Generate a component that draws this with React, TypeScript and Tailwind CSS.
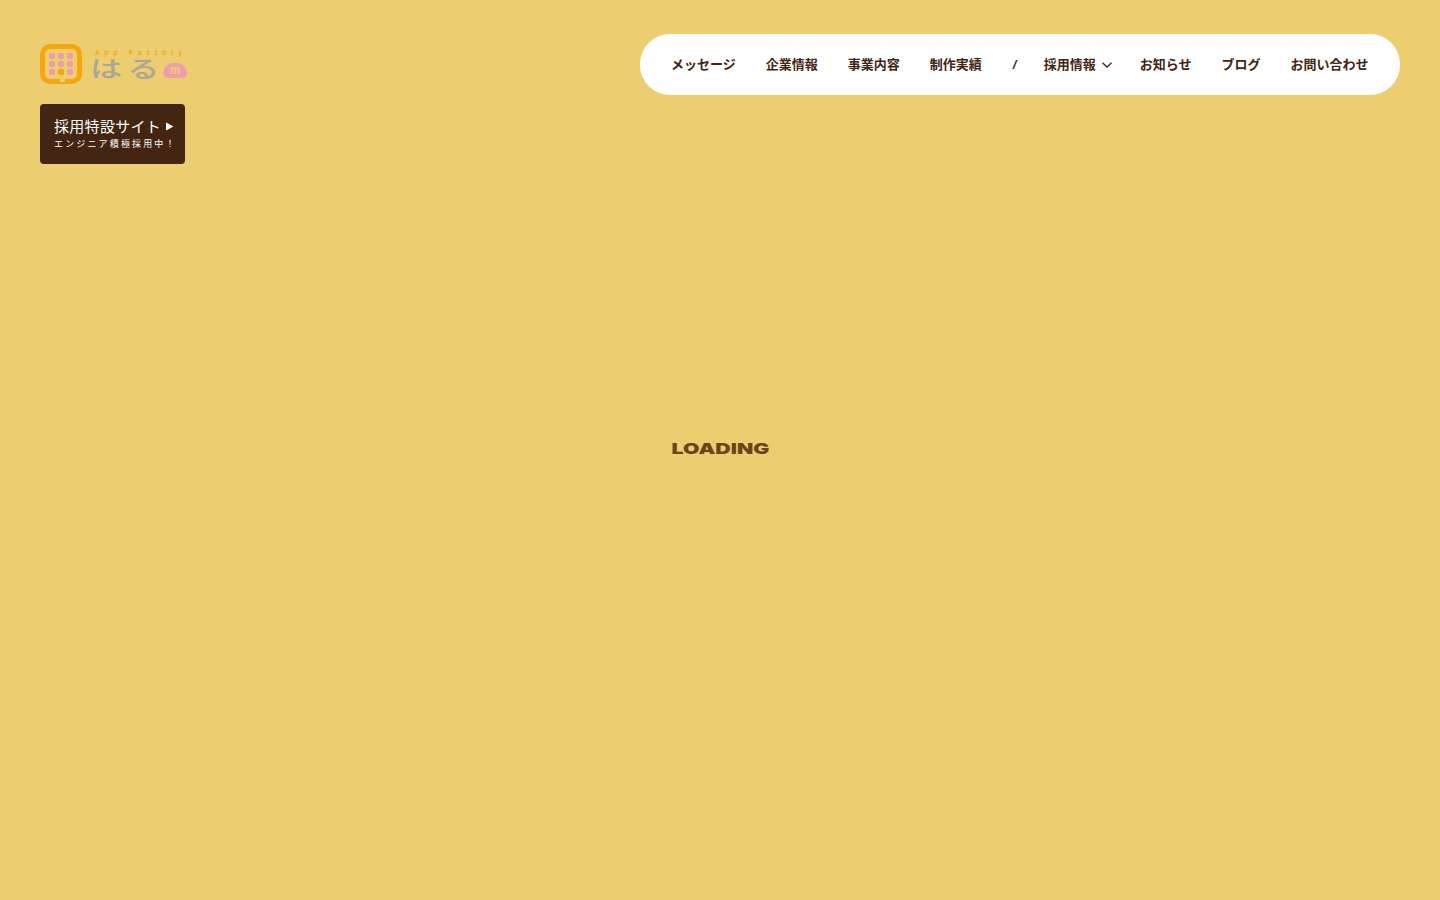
const navItems = ["メッセージ", "企業情報", "事業内容", "制作実績"]
const navItemsRight = ["お知らせ", "ブログ", "お問い合わせ"]

const cjk = "font-['Noto_Sans_CJK_JP','Noto_Sans',sans-serif]"

function LogoMark() {
  const pink = [0, 1, 2, 3, 4, 5, 6, 8]
  return (
    <div className="relative flex h-10 w-[42px] items-center justify-center rounded-[10px] border-[5px] border-[#f6a70f] bg-[#eccd70]">
      <div className="grid grid-cols-3 gap-x-[3px] gap-y-[2px]">
        {[0, 1, 2, 3, 4, 5, 6, 7, 8].map((i) => (
          <span
            key={i}
            className={pink.includes(i) ? "h-[6px] w-[6px] rounded-[2px] bg-[#ea9fae]" : "h-[6px] w-[6px] rounded-[1px] bg-[#f6a70f]"}
          />
        ))}
      </div>
      <span className="absolute -bottom-[3px] left-[15px] h-[3px] w-[5px] bg-[#eccd70]" />
    </div>
  )
}

function Logo() {
  return (
    <div className="flex h-10 items-start gap-[8px]">
      <LogoMark />
      <div className="flex w-[98px] flex-col">
        <span className="mt-[4px] h-[10px] pl-[5px] font-['Liberation_Sans',sans-serif] text-[6.5px] leading-[10px] font-bold tracking-[4.9px] whitespace-nowrap text-[#f6a70f]">
          App Factory
        </span>
        <div className="flex h-[22px] items-center">
          <span className="w-[73px]">
            <span className={`${cjk} inline-block origin-left scale-x-[1.4] text-[23px] leading-[22px] font-medium tracking-[3.5px] whitespace-nowrap text-[#a9a69a]`}>
              はる
            </span>
          </span>
          <span className="mt-[3px] flex h-[15px] w-[24px] shrink-0 items-center justify-center rounded-t-[10px] rounded-b-[5px] bg-[#ee9db0] font-['Liberation_Sans',sans-serif] text-[12px] leading-[15px] font-bold text-[#eccd70]">
            m
          </span>
        </div>
      </div>
    </div>
  )
}

function RecruitButton() {
  return (
    <a className={`${cjk} flex h-[60px] w-[145px] flex-col rounded-[4px] bg-[#432511] pt-[12px] pl-[14px] text-white`}>
      <span className="flex items-center text-[15px] leading-[20px] tracking-[0.3px] whitespace-nowrap">
        採用特設サイト
        <svg className="mt-[1px] ml-[4px]" width="9" height="9" viewBox="0 0 9 9" fill="#ffffff">
          <path d="M1 0.5 L8.5 4.5 L1 8.5 Z" />
        </svg>
      </span>
      <span className="mt-[2px] text-[9px] leading-[12px] tracking-[2.15px] whitespace-nowrap">エンジニア積極採用中！</span>
    </a>
  )
}

function Nav() {
  return (
    <nav className={`${cjk} flex h-[61px] w-[760px] items-center rounded-[30px] bg-white pb-[2px] pl-[31px] text-[13px] font-bold whitespace-nowrap text-[#432511]`}>
      <div className="flex gap-[30px]">
        {navItems.map((item) => (
          <a key={item}>{item}</a>
        ))}
      </div>
      <span className="mt-[3px] ml-[31px] w-[31px] font-['Liberation_Sans',sans-serif] text-[13px] italic">/</span>
      <a className="flex items-center">
        採用情報
        <svg className="mt-[2px] ml-[6px]" width="10" height="6" viewBox="0 0 10 6" fill="none" stroke="#432511" strokeWidth="1.3">
          <path d="M0.5 0.8 L5 5 L9.5 0.8" />
        </svg>
      </a>
      <div className="ml-[28px] flex gap-[30px]">
        {navItemsRight.map((item) => (
          <a key={item}>{item}</a>
        ))}
      </div>
    </nav>
  )
}

export default function App() {
  return (
    <div className="relative h-[900px] w-full overflow-hidden bg-[#eccd70]">
      <header className="flex items-start justify-between px-10 pt-[34px]">
        <div className="flex flex-col gap-5 pt-[10px]">
          <Logo />
          <RecruitButton />
        </div>
        <Nav />
      </header>
      <div className="absolute inset-0 flex items-center justify-center pb-[2px]">
        <span className="scale-x-[1.42] font-['Inter',sans-serif] text-[15px] font-black text-[#6a4519]">LOADING</span>
      </div>
    </div>
  )
}
